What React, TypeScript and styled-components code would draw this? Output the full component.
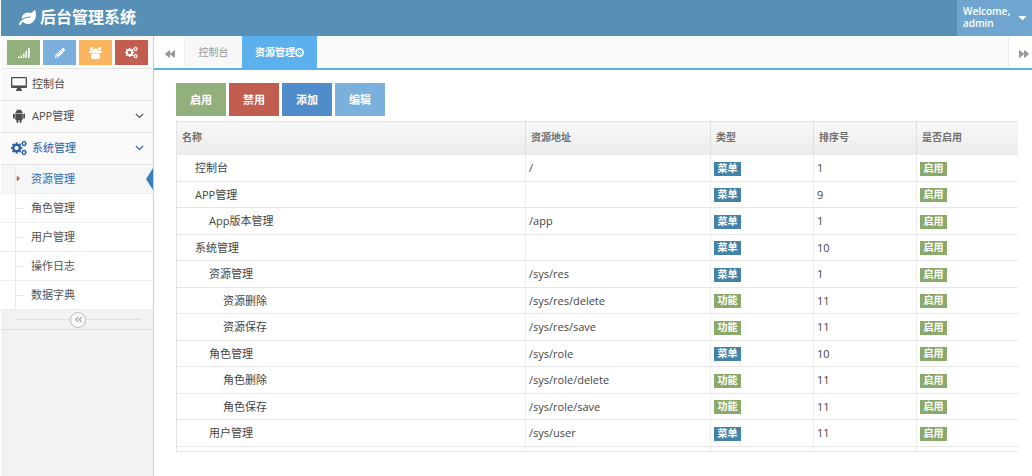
import React from 'react';
import styled, { createGlobalStyle, css } from 'styled-components';
import {
  FaAngleDoubleLeft,
  FaBackward,
  FaCaretDown,
  FaCaretRight,
  FaForward,
  FaLeaf,
  FaPencilAlt,
} from 'react-icons/fa';

const GlobalStyle = createGlobalStyle`
  *, *::before, *::after { box-sizing: border-box; }
  html, body { margin: 0; background: #fff; }
  body, button {
    font-family: "Open Sans", "Noto Sans CJK SC", sans-serif;
    font-size: 11px;
    line-height: 14px;
    color: #444;
  }
  button { border: 0; margin: 0; padding: 0; cursor: pointer; }
  a { color: inherit; text-decoration: none; }
  ul { list-style: none; margin: 0; padding: 0; }
  svg { display: block; flex: none; }
`;

const Page = styled.div`
  min-height: 100vh;
  display: flex;
  flex-direction: column;
  padding-left: 1px;
`;

const Navbar = styled.header`
  display: flex;
  justify-content: space-between;
  height: 36px;
  background: #578fb7;
  color: #fff;
`;

const Brand = styled.a`
  display: flex;
  align-items: center;
  gap: 4px;
  padding: 0 0 2px 18px;
  font-size: 16px;
  line-height: 20px;
  font-weight: 600;
`;

const UserMenu = styled.button`
  display: flex;
  align-items: center;
  gap: 6px;
  width: 75px;
  padding: 0 4px 2px 6px;
  background: #6ea6cf;
  color: #fff;
  font-size: 10px;
  font-weight: 600;
  line-height: 12px;
  text-align: left;
`;

const Body = styled.div`
  flex: 1;
  display: flex;
`;

const Sidebar = styled.nav`
  flex: none;
  width: 153px;
  background: #f2f2f2;
  border-right: 1px solid #ccc;
`;

const Shortcuts = styled.div`
  display: flex;
  gap: 3px;
  padding: 4px 5px 3px 6px;
  background: #fafafa;
`;

const Shortcut = styled.button<{ $color: string }>`
  flex: 1;
  display: flex;
  align-items: center;
  justify-content: center;
  height: 25px;
  background: ${(p) => p.$color};
  color: #fff;
`;

const MenuLink = styled.a<{ $open?: boolean }>`
  display: flex;
  align-items: center;
  gap: 5px;
  height: 32px;
  padding: 0 9px 1px 9px;
  border-top: 1px solid #e5e5e5;
  background: ${(p) => (p.$open ? '#fafafa' : '#f9f9f9')};
  color: ${(p) => (p.$open ? '#2b5fa5' : '#4d4d4d')};
`;

const MenuIcon = styled.span`
  display: flex;
  justify-content: center;
  width: 17px;
`;

const MenuText = styled.span`
  flex: 1;
`;

const SubMenu = styled.ul`
  border-top: 1px solid #e5e5e5;
  background: #fff;
`;

const SubItem = styled.li<{ $active?: boolean }>`
  position: relative;
  height: 29px;
  border-bottom: 1px solid #eee;
  background: ${(p) => (p.$active ? '#f4f6f7' : '#fff')};

  &::before {
    content: '';
    position: absolute;
    left: 14px;
    top: 0;
    bottom: -1px;
    border-left: 1px solid #e3eaf0;
  }

  ${(p) =>
    p.$active
      ? css`
          &::after {
            content: '';
            position: absolute;
            right: 0;
            top: 3px;
            border: 11px solid transparent;
            border-left-width: 0;
            border-right: 7px solid #3a80b6;
          }
        `
      : css`
          &::after {
            content: '';
            position: absolute;
            left: 15px;
            top: 14px;
            width: 7px;
            border-top: 1px solid #dde6ed;
          }
        `}
`;

const SubLink = styled.a<{ $active?: boolean }>`
  display: flex;
  align-items: center;
  height: 100%;
  padding-left: 30px;
  color: ${(p) => (p.$active ? '#2b6fb0' : '#525252')};
`;

const ActiveMark = styled.span`
  position: absolute;
  left: 13px;
  top: 9px;
  z-index: 1;
  color: #c86139;
`;

const Collapse = styled.div`
  display: flex;
  align-items: center;
  justify-content: center;
  height: 20px;
  padding: 0 12px 0 14px;
  border-bottom: 1px solid #e0e0e0;

  &::before,
  &::after {
    content: '';
    flex: 1;
    border-top: 1px solid #e0e0e0;
  }
`;

const CollapseButton = styled.button`
  display: flex;
  align-items: center;
  justify-content: center;
  width: 16px;
  height: 16px;
  border: 1px solid #bbb;
  border-radius: 50%;
  background: #fff;
  color: #aaa;
`;

const Main = styled.main`
  flex: 1;
  min-width: 0;
`;

const TabBar = styled.div`
  display: flex;
  height: 34px;
  background: #fafafa;
  border-bottom: 2px solid #5cb0e8;
`;

const TabScroll = styled.button<{ $end?: boolean }>`
  display: flex;
  align-items: center;
  justify-content: center;
  width: ${(p) => (p.$end ? 24 : 31)}px;
  padding: ${(p) => (p.$end ? '4px 0 0 6px' : '4px 0 0 2px')};
  margin-left: ${(p) => (p.$end ? 'auto' : '0')};
  background: #fff;
  color: #999;
  border: solid #eee;
  border-width: ${(p) => (p.$end ? '0 0 0 1px' : '0 1px 0 0')};
`;

const Tab = styled.button<{ $active?: boolean }>`
  display: flex;
  align-items: center;
  justify-content: center;
  width: ${(p) => (p.$active ? 75 : 57)}px;
  background: ${(p) => (p.$active ? '#5cb0ee' : '#f7f7f7')};
  color: ${(p) => (p.$active ? '#fff' : '#999')};
  font-size: 10px;
  font-weight: ${(p) => (p.$active ? 700 : 400)};
`;

const Content = styled.div`
  padding: 13px 14px 24px 22px;
`;

const Actions = styled.div`
  display: flex;
  gap: 3px;
  margin-bottom: 5px;
`;

const ActionButton = styled.button<{ $color: string }>`
  width: 50px;
  height: 33px;
  background: ${(p) => p.$color};
  color: #fff;
  font-weight: 700;
`;

const Grid = styled.table`
  width: 100%;
  table-layout: fixed;
  border-collapse: separate;
  border-spacing: 0;
  border-left: 1px solid #e4e4e4;
`;

const HeadCell = styled.th<{ $width?: number }>`
  width: ${(p) => (p.$width ? `${p.$width}px` : 'auto')};
  height: 34px;
  padding: 0 5px 3px;
  border-top: 1px solid #e2e2e2;
  border-right: 1px solid #e0e0e0;
  background: linear-gradient(#f8f8f8, #ececec);
  color: #707070;
  font-size: 10px;
  font-weight: 700;
  text-align: left;

  &:last-child {
    border-right: 0;
  }
`;

const Row = styled.tr`
  height: 26px;

  &:nth-child(odd) {
    height: 27px;
  }
`;

const Cell = styled.td<{ $level?: number }>`
  padding: 0 3px;
  padding-left: ${(p) => (p.$level ? 4 + p.$level * 14 : 3)}px;
  border-bottom: 1px solid #e6e6e6;
  border-right: 1px solid #ececec;

  &:last-child {
    border-right: 0;
  }
`;

const TailCell = styled(Cell)`
  height: 5px;
`;

const Badge = styled.span<{ $green?: boolean }>`
  display: block;
  width: 27px;
  height: 14px;
  margin-top: 1px;
  background: ${(p) => (p.$green ? '#8aaa6c' : '#4283ab')};
  color: #fff;
  font-size: 10px;
  line-height: 12px;
  font-weight: 700;
  text-align: center;
`;

const DesktopIcon = () => (
  <svg width="16" height="14" viewBox="0 0 16 14" aria-hidden="true">
    <path
      fill="currentColor"
      fillRule="evenodd"
      d="M1.200 0h13.600Q16 0 16 1.200v8.600q0 1.200-1.200 1.200H10q0 1.300.8 1.900.3.200.3.600 0 .5-.5.5H5.400q-.5 0-.5-.5 0-.4.3-.6.8-.6.8-1.900H1.200Q0 11 0 9.800V1.200Q0 0 1.200 0ZM1.300 1.200v7.200h13.400V1.200Z"
    />
  </svg>
);

const AndroidIcon = () => (
  <svg width="12" height="14" viewBox="0 0 12 14" fill="currentColor" aria-hidden="true">
    <path d="M2.300 4.300C2.300 2.800 3.100 1.800 4.200 1.200L3.600.2l.3-.2.7 1.100a4.200 4.200 0 0 1 2.800 0L8.100 0l.3.200-.6 1C8.900 1.800 9.700 2.800 9.700 4.300Z" />
    <rect x="2.300" y="4.700" width="7.400" height="6.500" rx=".8" />
    <rect x="0" y="4.600" width="1.800" height="5" rx=".9" />
    <rect x="10.200" y="4.600" width="1.800" height="5" rx=".9" />
    <rect x="3.500" y="9" width="1.900" height="5" rx=".9" />
    <rect x="6.600" y="9" width="1.900" height="5" rx=".9" />
  </svg>
);

const GearsIcon = ({ size }: { size: number }) => (
  <svg width={size} height={size} viewBox="0 0 16 16" fill="none" stroke="currentColor" aria-hidden="true">
    <circle cx="5.600" cy="8" r="3.300" strokeWidth="2.400" />
    <circle cx="5.600" cy="8" r="4.900" strokeWidth="1.500" pathLength="16" strokeDasharray="1 1" strokeDashoffset=".5" />
    <circle cx="13" cy="3.600" r="1.700" strokeWidth="1.300" />
    <circle cx="13" cy="3.600" r="2.600" strokeWidth=".9" pathLength="12" strokeDasharray="1 1" strokeDashoffset=".5" />
    <circle cx="13" cy="12.400" r="1.700" strokeWidth="1.300" />
    <circle cx="13" cy="12.400" r="2.600" strokeWidth=".9" pathLength="12" strokeDasharray="1 1" strokeDashoffset=".5" />
  </svg>
);

const UsersIcon = () => (
  <svg width="13" height="12" viewBox="0 0 13 12" fill="currentColor" aria-hidden="true">
    <circle cx="2.600" cy="1.900" r="1.800" />
    <circle cx="10.400" cy="1.900" r="1.800" />
    <circle cx="6.500" cy="3.900" r="2.500" />
    <path d="M0 6V5Q0 3.700 1 3.700q1.500.7 2.700.2Q3.700 5.300 4.500 6Z" />
    <path d="M13 6V5q0-1.300-1-1.300-1.500.7-2.700.2 0 1.400-.8 2.100Z" />
    <path d="M2 10.200C2 7.800 2.700 6.300 4.100 6.300q2.400 1.500 4.800 0c1.400 0 2.100 1.500 2.100 3.900q0 1.800-1.800 1.800H3.800Q2 12 2 10.200Z" />
  </svg>
);

const SignalIcon = () => (
  <svg width="12" height="10" viewBox="0 0 12 10" fill="currentColor" aria-hidden="true">
    <path d="M0 8.500h1.500V10H0ZM2.500 7.500H4V10H2.500ZM5 5.500h1.500V10H5ZM7.500 3H9v7H7.500ZM10 0h1.700v10H10Z" />
  </svg>
);

const ChevronIcon = () => (
  <svg width="9" height="6" viewBox="0 0 9 6" fill="none" stroke="currentColor" aria-hidden="true">
    <path d="m.8.8 3.700 3.700L8.200.8" strokeWidth="1.200" />
  </svg>
);

const CloseIcon = () => (
  <svg width="9" height="9" viewBox="0 0 9 9" fill="none" stroke="currentColor" aria-hidden="true">
    <circle cx="4.500" cy="4.500" r="3.600" strokeWidth="1.700" />
    <path d="m3.300 3.300 2.400 2.400M5.700 3.300 3.300 5.700" strokeWidth=".9" />
  </svg>
);

type Resource = {
  name: string;
  level: number;
  url: string;
  kind: '菜单' | '功能';
  order: number;
};

const resources: Resource[] = [
  { name: '控制台', level: 1, url: '/', kind: '菜单', order: 1 },
  { name: 'APP管理', level: 1, url: '', kind: '菜单', order: 9 },
  { name: 'App版本管理', level: 2, url: '/app', kind: '菜单', order: 1 },
  { name: '系统管理', level: 1, url: '', kind: '菜单', order: 10 },
  { name: '资源管理', level: 2, url: '/sys/res', kind: '菜单', order: 1 },
  { name: '资源删除', level: 3, url: '/sys/res/delete', kind: '功能', order: 11 },
  { name: '资源保存', level: 3, url: '/sys/res/save', kind: '功能', order: 11 },
  { name: '角色管理', level: 2, url: '/sys/role', kind: '菜单', order: 10 },
  { name: '角色删除', level: 3, url: '/sys/role/delete', kind: '功能', order: 11 },
  { name: '角色保存', level: 3, url: '/sys/role/save', kind: '功能', order: 11 },
  { name: '用户管理', level: 2, url: '/sys/user', kind: '菜单', order: 11 },
];

const subItems = ['资源管理', '角色管理', '用户管理', '操作日志', '数据字典'];

export default function App() {
  return (
    <Page>
      <GlobalStyle />
      <Navbar>
        <Brand href="#">
          <FaLeaf size={17} />
          后台管理系统
        </Brand>
        <UserMenu>
          <span>
            Welcome,
            <br />
            admin
          </span>
          <FaCaretDown size={13} />
        </UserMenu>
      </Navbar>
      <Body>
        <Sidebar>
          <Shortcuts>
            <Shortcut $color="#91b07c" aria-label="统计"><SignalIcon /></Shortcut>
            <Shortcut $color="#7bb0dc" aria-label="编辑"><FaPencilAlt size={10} /></Shortcut>
            <Shortcut $color="#fab45e" aria-label="用户"><UsersIcon /></Shortcut>
            <Shortcut $color="#c25e50" aria-label="设置"><GearsIcon size={13} /></Shortcut>
          </Shortcuts>
          <MenuLink href="#">
            <MenuIcon><DesktopIcon /></MenuIcon>
            <MenuText>控制台</MenuText>
          </MenuLink>
          <MenuLink href="#">
            <MenuIcon><AndroidIcon /></MenuIcon>
            <MenuText>APP管理</MenuText>
            <ChevronIcon />
          </MenuLink>
          <MenuLink href="#" $open>
            <MenuIcon><GearsIcon size={16} /></MenuIcon>
            <MenuText>系统管理</MenuText>
            <ChevronIcon />
          </MenuLink>
          <SubMenu>
            {subItems.map((label, i) => (
              <SubItem key={label} $active={i === 0}>
                {i === 0 && <ActiveMark><FaCaretRight size={9} /></ActiveMark>}
                <SubLink href="#" $active={i === 0}>{label}</SubLink>
              </SubItem>
            ))}
          </SubMenu>
          <Collapse>
            <CollapseButton aria-label="收起菜单"><FaAngleDoubleLeft size={9} /></CollapseButton>
          </Collapse>
        </Sidebar>
        <Main>
          <TabBar>
            <TabScroll aria-label="向左"><FaBackward size={10} /></TabScroll>
            <Tab>控制台</Tab>
            <Tab $active>
              资源管理
              <CloseIcon />
            </Tab>
            <TabScroll $end aria-label="向右"><FaForward size={10} /></TabScroll>
          </TabBar>
          <Content>
            <Actions>
              <ActionButton $color="#91b07c">启用</ActionButton>
              <ActionButton $color="#c25e50">禁用</ActionButton>
              <ActionButton $color="#4f8cc9">添加</ActionButton>
              <ActionButton $color="#7bb0dc">编辑</ActionButton>
            </Actions>
            <Grid>
              <thead>
                <tr>
                  <HeadCell>名称</HeadCell>
                  <HeadCell $width={185}>资源地址</HeadCell>
                  <HeadCell $width={103}>类型</HeadCell>
                  <HeadCell $width={103}>排序号</HeadCell>
                  <HeadCell $width={101}>是否启用</HeadCell>
                </tr>
              </thead>
              <tbody>
                {resources.map((r, i) => (
                  <Row key={i}>
                    <Cell $level={r.level}>{r.name}</Cell>
                    <Cell>{r.url}</Cell>
                    <Cell><Badge $green={r.kind === '功能'}>{r.kind}</Badge></Cell>
                    <Cell>{r.order}</Cell>
                    <Cell><Badge $green>启用</Badge></Cell>
                  </Row>
                ))}
              </tbody>
              <tfoot>
                <tr>
                  <TailCell />
                  <TailCell />
                  <TailCell />
                  <TailCell />
                  <TailCell />
                </tr>
              </tfoot>
            </Grid>
          </Content>
        </Main>
      </Body>
    </Page>
  );
}
